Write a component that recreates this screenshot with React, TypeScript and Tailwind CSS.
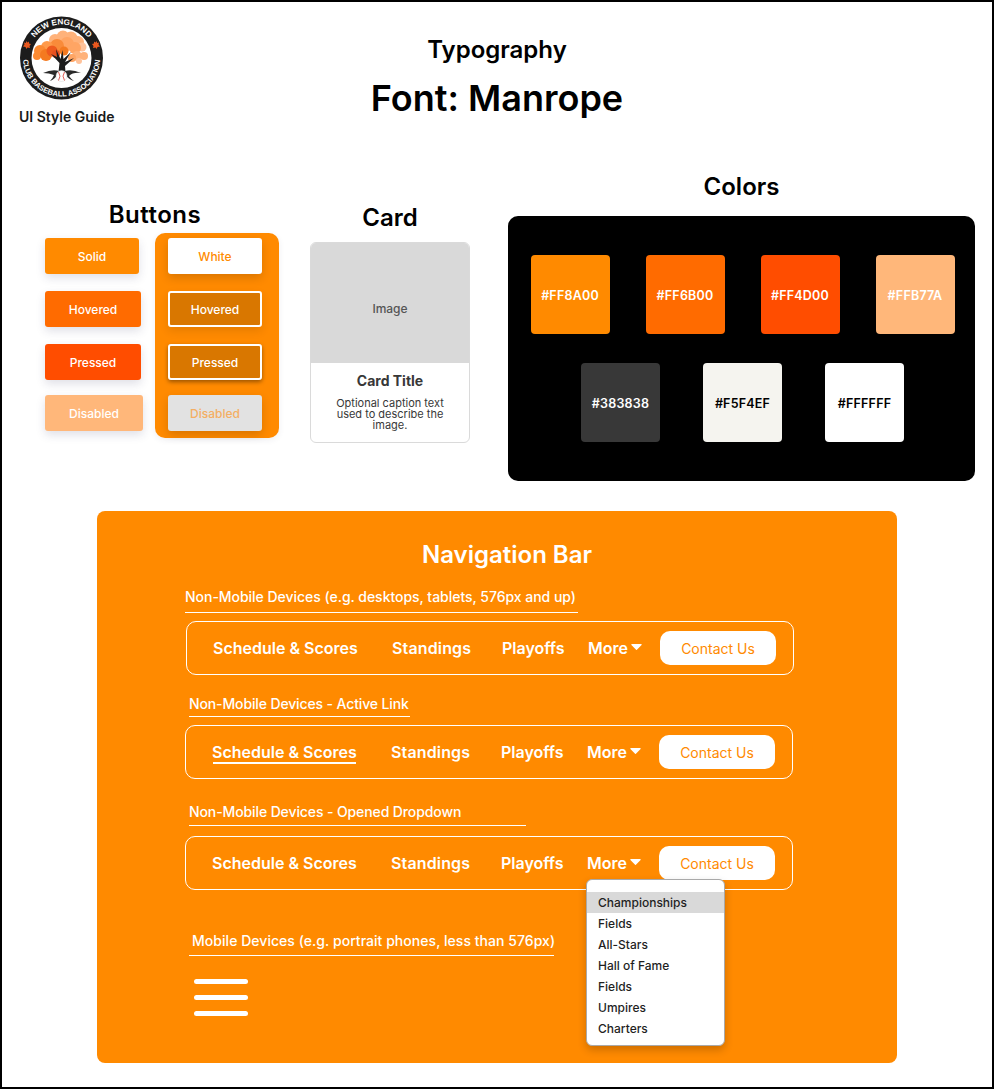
const font = '[font-family:Inter,"Liberation_Sans",sans-serif]';

// foliage blobs for the logo tree: [cx, cy, r, colour]
const foliage: [number, number, number, string][] = [
  [36, 24, 6, "#FFB27A"],
  [44, 21, 6.5, "#FFB27A"],
  [52, 22, 6.5, "#FFB27A"],
  [59, 26, 6, "#FFB27A"],
  [63, 31, 4.5, "#FFC29A"],
  [48, 28, 7, "#FFA564"],
  [56, 32, 6, "#FFA564"],
  [38, 30, 7, "#F98B3A"],
  [28, 31, 6, "#FF9A4A"],
  [21, 35, 6, "#FB8A32"],
  [18, 40, 4, "#FB8A32"],
  [27, 39, 6, "#F47A20"],
  [33, 35, 5.5, "#EE5A1E"],
  [37, 38, 4, "#E8501F"],
  [45, 35, 4.5, "#F47A20"],
  [58, 40, 5, "#FFB27A"],
  [65, 40, 4, "#FFB27A"],
  [53, 42, 4, "#FFA564"],
  [60, 45, 3, "#FFC29A"],
];

function Logo() {
  return (
    <svg width="86" height="86" viewBox="0 0 86 86" className="block">
      <circle cx="42.5" cy="42" r="41.5" fill="#1c1c1c" />
      <circle cx="42.5" cy="42" r="30" fill="#ffffff" />
      <defs>
        <path id="topArc" d="M 9 42 A 33.5 33.5 0 0 1 76 42" />
        <path id="bottomArc" d="M 4 42 A 38.5 38.5 0 0 0 81 42" />
      </defs>
      <text fontSize="8" fontWeight="700" fill="#fff" fontFamily="Liberation Sans, sans-serif">
        <textPath href="#topArc" startOffset="50%" textAnchor="middle" textLength="62" lengthAdjust="spacingAndGlyphs">
          NEW ENGLAND
        </textPath>
      </text>
      <text fontSize="7.5" fontWeight="700" fill="#fff" fontFamily="Liberation Sans, sans-serif">
        <textPath href="#bottomArc" startOffset="50%" textAnchor="middle" textLength="117" lengthAdjust="spacingAndGlyphs">
          CLUB BASEBALL ASSOCIATION
        </textPath>
      </text>
      <path d="M7 25l1.5 1.5 1.5-1 0 2 2 0.5-1.5 2 0.5 2-2.500-0.500-1 1.500-1-2-2.500-0.500 1.500-2-0.500-2 2 0.500z" fill="#e8581f" />
      <path d="M78 25l-1.500 1.500-1.500-1 0 2-2 0.500 1.500 2-0.500 2 2.500-0.500 1 1.500 1-2 2.500-0.500-1.500-2 0.500-2-2 0.500z" fill="#e8581f" />
      {foliage.map(([cx, cy, r, fill], i) => (
        <circle key={i} cx={cx} cy={cy} r={r} fill={fill} />
      ))}
      <path
        d="M39.500 56 L40.500 47 L32 38 L38 41 L37 33 L41.500 43 L43.500 34 L44.500 43 L52 36 L46 46 L55 42 L46 50 L46.500 56 Z"
        fill="#1c1c1c"
      />
      <path
        d="M24 57 Q33 53 40 55 L46 55 Q53 53 62 57 Q54 56 50 60 Q52 63 55 65 Q49 63 47 59 L38 59 Q36 63 31 65 Q34 62 35 59 Q30 57 24 57Z"
        fill="#2a2a2a"
      />
      <circle cx="42.500" cy="60" r="5.500" fill="#fff" stroke="#c9c9c9" strokeWidth="0.4" />
      <path d="M39.500 56 Q42.500 60 39.500 64.500 M45.500 56 Q42.500 60 45.500 64.500" fill="none" stroke="#d8352b" strokeWidth="0.8" />
    </svg>
  );
}

function ButtonBox({
  label,
  className,
}: {
  label: string;
  className: string;
}) {
  return (
    <div
      className={`h-9 rounded-[3px] flex items-center justify-center pt-[2px] text-[12px] font-medium ${className}`}
    >
      {label}
    </div>
  );
}

function Swatch({ hex, className }: { hex: string; className: string }) {
  return (
    <div
      className={`w-[79px] h-[79px] pt-[4px] rounded-[4px] flex items-center justify-center text-[12.5px] font-semibold tracking-[0.2px] ${className}`}
    >
      {hex}
    </div>
  );
}

function SectionLabel({
  text,
  className,
  lineClassName,
}: {
  text: string;
  className: string;
  lineClassName: string;
}) {
  return (
    <div>
      <div className={`h-5 leading-5 text-[14px] font-medium text-white whitespace-nowrap ${className}`}>
        {text}
      </div>
      <div className={`h-px bg-white ${lineClassName}`} />
    </div>
  );
}

function NavBar({
  className,
  active,
  children,
}: {
  className: string;
  active?: boolean;
  children?: React.ReactNode;
}) {
  return (
    <div
      className={`relative w-[608px] h-[54px] border border-white rounded-[10px] flex items-center pl-[26px] text-white text-[16px] font-semibold ${className}`}
    >
      <span className="relative w-[179px] whitespace-nowrap">
        Schedule & Scores
        {active && (
          <span className="absolute left-px w-[143px] top-[22px] h-[2px] bg-white" />
        )}
      </span>
      <span className="w-[110px] whitespace-nowrap tracking-[0.15px]">Standings</span>
      <span className="w-[86px] whitespace-nowrap">Playoffs</span>
      <span className="w-[43px] whitespace-nowrap">More</span>
      <svg width="11" height="6" viewBox="0 0 11 6" className="mb-[2px]">
        <path d="M0.8 0h9.400a0.600 0.600 0 0 1 0.400 1L5.900 5.700a0.600 0.600 0 0 1-0.800 0L0.400 1A0.600 0.600 0 0 1 0.800 0z" fill="#fff" />
      </svg>
      <div className="ml-[18px] w-[116px] h-[34px] rounded-[10px] bg-white text-[#FF8A00] text-[14px] font-normal flex items-center justify-center">
        Contact Us
      </div>
      {children}
    </div>
  );
}

const dropdownItems = ["Fields", "All-Stars", "Hall of Fame", "Fields", "Umpires", "Charters"];

export default function App() {
  return (
    <div className={`w-[994px] h-[1089px] border-2 border-black bg-white text-black overflow-hidden ${font}`}>
      {/* header */}
      <div className="h-[150px] grid grid-cols-[1fr_auto_1fr]">
        <div className="pl-[17px] pt-[14px]">
          <Logo />
          <div className="mt-[5px] text-[14px] leading-5 font-semibold text-[#1a1a1a]">UI Style Guide</div>
        </div>
        <div className="text-center font-semibold pt-[32px]">
          <div className="text-[24px] leading-8">Typography</div>
          <div className="text-[36px] leading-[44px] mt-[10px]">Font: Manrope</div>
        </div>
        <div />
      </div>

      {/* buttons, card, colors */}
      <div className="flex items-start pl-[43px]">
        <div className="w-[236px] mt-[47px]">
          <div className="w-[220px] text-[24px] leading-8 font-semibold text-center tracking-[0.5px]">Buttons</div>
          <div className="flex mt-[2px]">
            <div className="w-[110px] pt-[5px] flex flex-col text-white">
              <ButtonBox label="Solid" className="w-[94px] bg-[#FF8A00] shadow-[0_4px_10px_rgba(50,50,93,0.15)]" />
              <ButtonBox label="Hovered" className="w-[96px] mt-[17px] bg-[#FF6B00] shadow-[0_4px_10px_rgba(50,50,93,0.15)]" />
              <ButtonBox label="Pressed" className="w-[96px] mt-[17px] bg-[#FF4D00] shadow-[0_4px_10px_rgba(50,50,93,0.15)]" />
              <ButtonBox label="Disabled" className="w-[98px] mt-[15px] bg-[#FFB77A] shadow-[0_4px_10px_rgba(50,50,93,0.15)]" />
            </div>
            <div className="w-[124px] h-[205px] rounded-[10px] bg-[#FF8A00] pl-[13px] pt-[5px] flex flex-col shadow-[0_2px_6px_rgba(50,50,93,0.08)]">
              <ButtonBox label="White" className="w-[94px] bg-white text-[#FF8A00] shadow-[0_4px_10px_rgba(0,0,0,0.15)]" />
              <ButtonBox label="Hovered" className="w-[94px] mt-[17px] bg-[#D97700] border-2 border-white text-white shadow-[0_4px_10px_rgba(0,0,0,0.1)]" />
              <ButtonBox label="Pressed" className="w-[94px] mt-[17px] bg-[#D97700] border-2 border-white text-white shadow-[0_2px_4px_rgba(0,0,0,0.4)]" />
              <ButtonBox label="Disabled" className="w-[94px] mt-[15px] bg-[#E2E2E2] text-[#F4AE63] shadow-[0_4px_10px_rgba(0,0,0,0.15)]" />
            </div>
          </div>
        </div>

        <div className="w-[160px] ml-[29px] mt-[50px]">
          <div className="text-[24px] leading-8 font-semibold text-center">Card</div>
          <div className="mt-[8px] h-[201px] rounded-[6px] border border-[#DADADA] overflow-hidden bg-white">
            <div className="h-[121px] -mt-px pt-[12px] bg-[#D9D9D9] flex items-center justify-center text-[12px] font-medium text-[#555]">
              Image
            </div>
            <div className="text-center pt-[8px] px-3">
              <div className="text-[14px] leading-5 font-bold text-[#383838]">Card Title</div>
              <div className="mt-[7px] text-[11px] leading-[11px] text-[#383838]">
                Optional caption text used to describe the image.
              </div>
            </div>
          </div>
        </div>

        <div className="w-[467px] ml-[38px] mt-[19px]">
          <div className="text-[24px] leading-8 font-semibold text-center">Colors</div>
          <div className="mt-[13px] h-[265px] rounded-[10px] bg-black pt-[39px] pl-[2px] flex flex-col items-center">
            <div className="flex gap-[36px]">
              <Swatch hex="#FF8A00" className="bg-[#FF8A00] text-white" />
              <Swatch hex="#FF6B00" className="bg-[#FF6B00] text-white" />
              <Swatch hex="#FF4D00" className="bg-[#FF4D00] text-white" />
              <Swatch hex="#FFB77A" className="bg-[#FFB77A] text-white" />
            </div>
            <div className="flex gap-[43px] mt-[29px]">
              <Swatch hex="#383838" className="bg-[#383838] text-white" />
              <Swatch hex="#F5F4EF" className="bg-[#F5F4EF] text-black" />
              <Swatch hex="#FFFFFF" className="bg-white text-black" />
            </div>
          </div>
        </div>
      </div>

      {/* navigation bar panel */}
      <div className="ml-[95px] mt-[30px] w-[800px] h-[552px] rounded-[8px] bg-[#FF8A00] pt-[28px] pl-[88px]">
        <div className="-ml-[68px] text-center text-[24px] leading-8 font-semibold text-white">Navigation Bar</div>

        <div className="mt-[16px]">
          <SectionLabel text="Non-Mobile Devices (e.g. desktops, tablets, 576px and up)" className="tracking-[-0.03px]" lineClassName="mt-[5px] w-[393px]" />
        </div>
        <NavBar className="mt-[8px] ml-px" />

        <div className="mt-[19px] ml-[4px]">
          <SectionLabel text="Non-Mobile Devices - Active Link" className="tracking-[-0.13px]" lineClassName="mt-[2px] w-[221px]" />
        </div>
        <NavBar className="mt-[8px]" active />

        <div className="mt-[23px] ml-[4px]">
          <SectionLabel text="Non-Mobile Devices - Opened Dropdown" className="tracking-[-0.11px]" lineClassName="mt-[3px] w-[337px]" />
        </div>
        <NavBar className="mt-[10px]">
          <div className="absolute left-[400px] top-[42px] w-[139px] h-[167px] bg-white rounded-[6px] border border-[#A9A9A9] shadow-[0_4px_8px_rgba(0,0,0,0.2)] pt-[12px] text-[12px] font-medium text-[#1f1f1f]">
            <div className="h-[21px] leading-[21px] pl-[11px] bg-[#D9D9D9]">Championships</div>
            {dropdownItems.map((item, i) => (
              <div key={i} className="h-[21px] leading-[21px] pl-[11px]">{item}</div>
            ))}
          </div>
        </NavBar>

        <div className="mt-[41px] ml-[4px]">
          <SectionLabel text="Mobile Devices (e.g. portrait phones, less than 576px)" className="pl-[3px] tracking-[0.04px]" lineClassName="mt-[4px] w-[365px]" />
        </div>
        <div className="mt-[23px] ml-[9px] flex flex-col gap-[11px]">
          <div className="w-[54px] h-[5px] rounded-full bg-white" />
          <div className="w-[54px] h-[5px] rounded-full bg-white" />
          <div className="w-[54px] h-[5px] rounded-full bg-white" />
        </div>
      </div>
    </div>
  );
}
